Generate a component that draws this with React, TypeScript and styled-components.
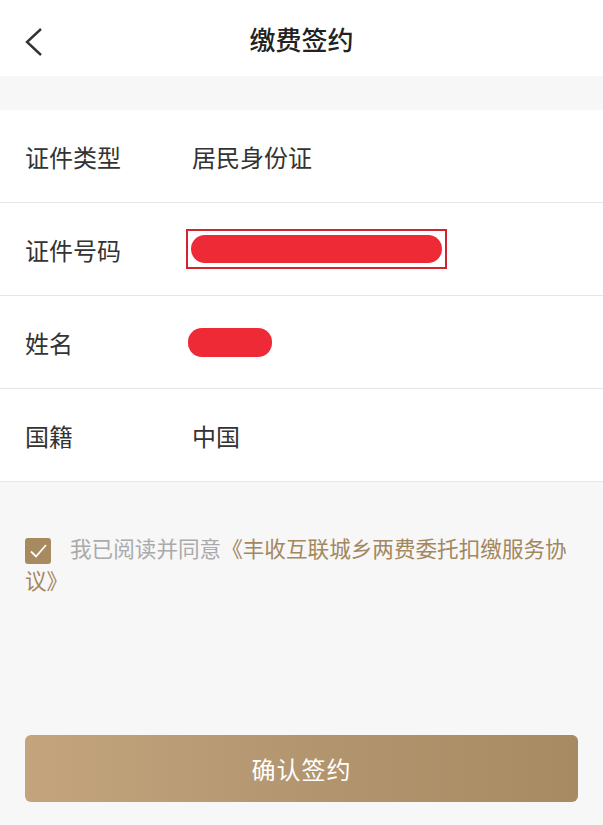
import styled, { createGlobalStyle } from 'styled-components';

const Global = createGlobalStyle`
  html, body {
    margin: 0;
    padding: 0;
    background: #f7f7f7;
    font-family: "Noto Sans CJK SC", "Noto Sans", sans-serif;
  }
`;

const Page = styled.div`
  width: 603px;
  min-height: 825px;
  background: #f7f7f7;
  display: flex;
  flex-direction: column;
`;

const Header = styled.header`
  height: 76px;
  background: #fff;
  display: flex;
  align-items: center;
  justify-content: center;
  position: relative;
`;

const Back = styled.button`
  position: absolute;
  left: 22px;
  top: 26px;
  width: 24px;
  height: 32px;
  padding: 0;
  border: none;
  background: none;
  display: flex;
`;

const Title = styled.h1`
  margin: 0;
  font-size: 26px;
  font-weight: 500;
  color: #222;
`;

const Form = styled.section`
  margin-top: 34px;
  background: #fff;
`;

const Row = styled.div`
  height: 92px;
  display: flex;
  align-items: center;
  padding-left: 25px;
  border-bottom: 1px solid #e6e6e6;
`;

const Label = styled.span`
  width: 167px;
  font-size: 24px;
  color: #333;
`;

const Value = styled.span`
  font-size: 24px;
  color: #333;
`;

const Redact = styled.span<{ $w: number; $h: number }>`
  display: block;
  width: ${p => p.$w}px;
  height: ${p => p.$h}px;
  background: #ec1f2a;
  border-radius: 14px;
  opacity: 0.95;
`;

const Outline = styled.span`
  display: flex;
  align-items: center;
  justify-content: center;
  width: 257px;
  height: 36px;
  margin-left: -6px;
  border: 2px solid #d1242f;
`;

const Agree = styled.div`
  padding: 50px 18px 0 25px;
  font-size: 21.6px;
  line-height: 31px;
  color: #aaa;
`;

const Check = styled.span`
  display: inline-flex;
  align-items: center;
  justify-content: center;
  width: 26px;
  height: 26px;
  border-radius: 3px;
  background: #a88a60;
  vertical-align: -5px;
  margin-right: 19px;
`;

const Link = styled.span`
  color: #a3875f;
`;

const Spacer = styled.div`
  flex: 1;
`;

const Submit = styled.button`
  margin: 0 25px 23px;
  height: 67px;
  border: none;
  border-radius: 6px;
  background: linear-gradient(90deg, #c3a47d 0%, #b39670 50%, #a88a62 100%);
  color: #fff;
  font-family: inherit;
  font-size: 24px;
  letter-spacing: 1px;
`;

export default function App() {
  return (
    <Page>
      <Global />
      <Header>
        <Back aria-label="返回">
          <svg width="24" height="32" viewBox="0 0 24 32">
            <path d="M19 3 L5 16 L19 29" fill="none" stroke="#333" strokeWidth="2.4" />
          </svg>
        </Back>
        <Title>缴费签约</Title>
      </Header>
      <Form>
        <Row>
          <Label>证件类型</Label>
          <Value>居民身份证</Value>
        </Row>
        <Row>
          <Label>证件号码</Label>
          <Outline>
            <Redact $w={251} $h={28} />
          </Outline>
        </Row>
        <Row>
          <Label>姓名</Label>
          <Redact $w={84} $h={29} style={{ marginLeft: -4 }} />
        </Row>
        <Row>
          <Label>国籍</Label>
          <Value>中国</Value>
        </Row>
      </Form>
      <Agree>
        <Check>
          <svg width="22" height="22" viewBox="0 0 22 22">
            <path d="M4 11.5 L9 16.5 L19 5" fill="none" stroke="#fff" strokeWidth="1.8" />
          </svg>
        </Check>
        我已阅读并同意<Link>《丰收互联城乡两费委托扣缴服务协议》</Link>
      </Agree>
      <Spacer />
      <Submit>确认签约</Submit>
    </Page>
  );
}
